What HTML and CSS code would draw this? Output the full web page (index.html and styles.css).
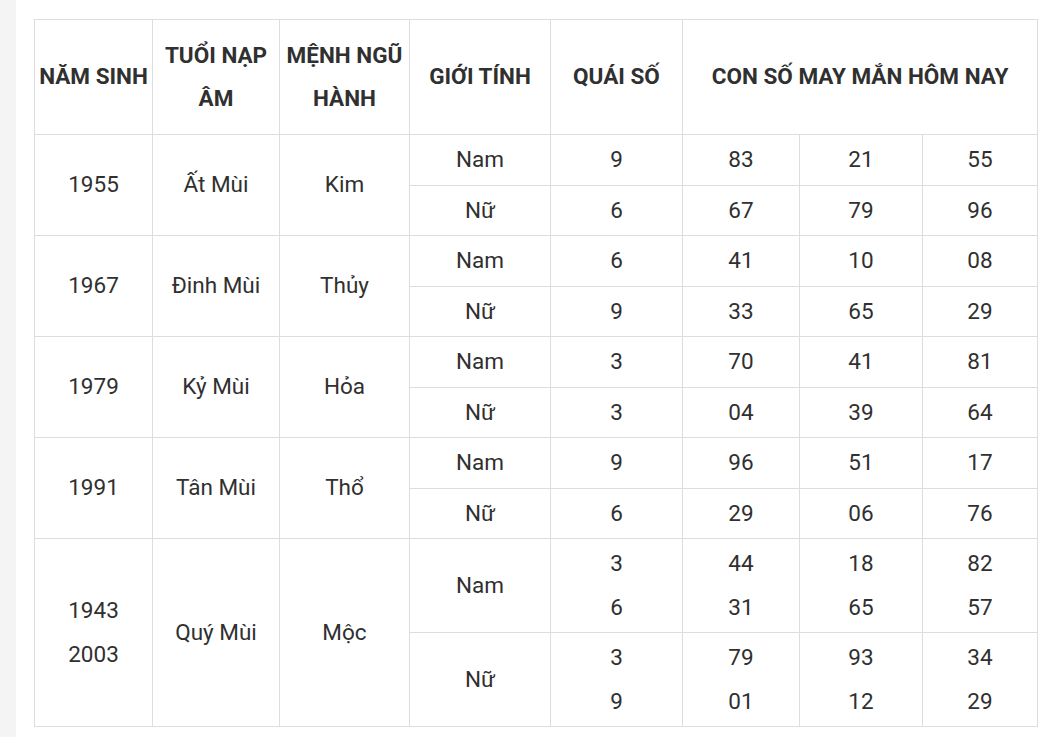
FILE: index.html
```html
<!DOCTYPE html>
<html lang="vi">
<head>
<meta charset="utf-8">
<title>Con số may mắn</title>
<link rel="stylesheet" href="styles.css">
</head>
<body>
<div class="page">
  <div class="side"></div>
  <main class="content">
    <table class="lucky">
      <colgroup>
        <col class="c-year"><col class="c-age"><col class="c-elem"><col class="c-sex"><col class="c-qs"><col class="c-n1"><col class="c-n2"><col class="c-n3">
      </colgroup>
      <thead>
        <tr>
          <th>NĂM SINH</th>
          <th>TUỔI NẠP ÂM</th>
          <th>MỆNH NGŨ HÀNH</th>
          <th>GIỚI TÍNH</th>
          <th>QUÁI SỐ</th>
          <th colspan="3">CON SỐ MAY MẮN HÔM NAY</th>
        </tr>
      </thead>
      <tbody>
        <tr><td rowspan="2">1955</td><td rowspan="2">Ất Mùi</td><td rowspan="2">Kim</td><td>Nam</td><td>9</td><td>83</td><td>21</td><td>55</td></tr>
        <tr><td>Nữ</td><td>6</td><td>67</td><td>79</td><td>96</td></tr>
        <tr><td rowspan="2">1967</td><td rowspan="2">Đinh Mùi</td><td rowspan="2">Thủy</td><td>Nam</td><td>6</td><td>41</td><td>10</td><td>08</td></tr>
        <tr><td>Nữ</td><td>9</td><td>33</td><td>65</td><td>29</td></tr>
        <tr><td rowspan="2">1979</td><td rowspan="2">Kỷ Mùi</td><td rowspan="2">Hỏa</td><td>Nam</td><td>3</td><td>70</td><td>41</td><td>81</td></tr>
        <tr><td>Nữ</td><td>3</td><td>04</td><td>39</td><td>64</td></tr>
        <tr><td rowspan="2">1991</td><td rowspan="2">Tân Mùi</td><td rowspan="2">Thổ</td><td>Nam</td><td>9</td><td>96</td><td>51</td><td>17</td></tr>
        <tr><td>Nữ</td><td>6</td><td>29</td><td>06</td><td>76</td></tr>
        <tr><td rowspan="2">1943<br>2003</td><td rowspan="2">Quý Mùi</td><td rowspan="2">Mộc</td><td>Nam</td><td>3<br>6</td><td>44<br>31</td><td>18<br>65</td><td>82<br>57</td></tr>
        <tr><td>Nữ</td><td>3<br>9</td><td>79<br>01</td><td>93<br>12</td><td>34<br>29</td></tr>
      </tbody>
    </table>
  </main>
</div>
</body>
</html>
```

FILE: styles.css
```css
html, body {
  margin: 0;
  padding: 0;
  background: #ffffff;
}

body {
  font-family: Roboto, "Liberation Sans", Arial, sans-serif;
  color: #303030;
}

.page {
  display: flex;
  min-height: 737px;
}

.side {
  flex: 0 0 16px;
  background: #f4f4f4;
}

.content {
  flex: 1;
  padding: 19px 0 0 18px;
}

.lucky {
  border-collapse: collapse;
  table-layout: fixed;
  width: 1004px;
  border: 1px solid #dddddd;
}

.c-year { width: 118px; }
.c-age { width: 127px; }
.c-elem { width: 130px; }
.c-sex { width: 141px; }
.c-qs { width: 132px; }
.c-n1 { width: 117px; }
.c-n2 { width: 123px; }
.c-n3 { width: 115px; }

.lucky th,
.lucky td {
  border: 1px solid #dddddd;
  text-align: center;
  vertical-align: middle;
  font-size: 22.5px;
}

.lucky th {
  font-weight: 700;
  line-height: 43.5px;
  padding: 13.5px 3px;
  color: #303030;
}

.lucky td {
  font-weight: 400;
  line-height: 43.5px;
  padding: 3px 4px;
  color: #303030;
}
```
